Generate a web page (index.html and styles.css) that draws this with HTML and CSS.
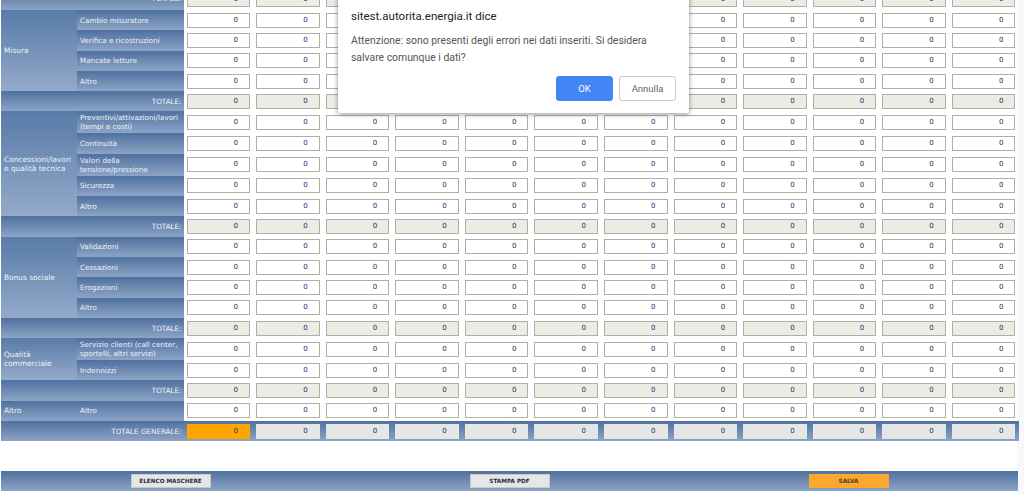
FILE: index.html
```html
<!DOCTYPE html>
<html lang="it">
<head>
  <meta charset="UTF-8" />
  <title>Maschera dati</title>
  <link rel="stylesheet" href="styles.css">
</head>
<body>

  <div class="page">
    <table class="grid" id="grid"></table>

    <div class="footer">
      <div class="footer-slot"><button class="btn">ELENCO MASCHERE</button></div>
      <div class="footer-slot"><button class="btn">STAMPA PDF</button></div>
      <div class="footer-slot"><button class="btn btn-save">SALVA</button></div>
    </div>
  </div>

  <div class="dialog">
    <div class="dialog-title">sitest.autorita.energia.it dice</div>
    <div class="dialog-text">Attenzione: sono presenti degli errori nei dati inseriti. Si desidera salvare comunque i dati?</div>
    <div class="dialog-actions">
      <button class="dialog-ok">OK</button>
      <button class="dialog-cancel">Annulla</button>
    </div>
  </div>

  <script src="script.js"></script>
</body>
</html>
```

FILE: styles.css
```css
html, body {
  margin: 0;
  height: 494px;
  overflow: hidden;
  background-color: #f8f8f8;
  font-family: "DejaVu Sans", Verdana, sans-serif;
}

.page {
  width: 1017px;
  height: 494px;
  background-color: #fff;
  padding-left: 1px;
  box-sizing: border-box;
}

.grid {
  width: 1017.5px;
  table-layout: fixed;
  border-collapse: collapse;
}

.grid td {
  padding: 0;
  vertical-align: middle;
}

.col-group { width: 76px; }
.col-label { width: 106.5px; }

.row-clip td { height: 10px; }
.row-clip .box { margin-top: -11px; }
.grid .row-clip .cell-total { background: linear-gradient(#6d89b0, #8ca4c6); }
.clip-text { margin-top: -11px; height: 9px; }

.row td { height: 20.3px; }
.row-tall td { height: 22px; }

.cell-group,
.cell-label,
.cell-total {
  color: #eef2f7;
  font-size: 7.2px;
  line-height: 9px;
}

.grid .cell-group {
  padding-left: 3px;
  font-size: 7.4px;
  background: linear-gradient(#587ba8, #94aac9);
}

.grid .cell-label {
  padding-left: 3px;
  background: linear-gradient(#4f719f, #8ca4c6);
}

.grid .cell-total {
  text-align: right;
  padding-right: 2px;
  background: linear-gradient(#4f719f, #8ca4c6);
}

.grid .cell-group.plain { background: linear-gradient(#4f719f, #8ca4c6); }

.cell-value { text-align: center; }

.bar-cell { background: linear-gradient(#4f719f, #8ca4c6); }

.box {
  width: 63.5px;
  height: 15px;
  margin: 0 auto;
  padding-right: 11px;
  box-sizing: border-box;
  background-color: #fff;
  border: 1px solid #aeaeaa;
  color: #12306a;
  font-size: 7px;
  line-height: 13px;
  text-align: right;
}

.box-total { background-color: #ecebe4; }
.box-grand { background-color: #e6e6e6; border-color: #e6e6e6; }
.box-orange { background-color: #ffa500; border-color: #ffa500; }

.footer {
  display: flex;
  width: 1017px;
  height: 20px;
  margin-top: 30px;
  background: linear-gradient(#4f719f, #8ca4c6);
}

.footer-slot {
  flex: 1;
  display: flex;
  justify-content: center;
  align-items: center;
}

.btn {
  width: 80px;
  height: 14px;
  padding: 0;
  border: 1px solid #c9c9c9;
  background-color: #e6e6e6;
  color: #1c3050;
  font-family: "DejaVu Sans", Verdana, sans-serif;
  font-size: 5.7px;
  font-weight: bold;
}

.btn-save {
  background-color: #fca72d;
  border-color: #fca72d;
  color: #4a3a1a;
}

.dialog {
  position: absolute;
  top: -10px;
  left: 338px;
  width: 351px;
  height: 123px;
  padding: 18px 13px 0;
  box-sizing: border-box;
  background-color: #fff;
  border-radius: 2px;
  box-shadow: 0 1px 5px rgba(0, 0, 0, 0.45);
  font-family: Roboto, sans-serif;
}

.dialog-title {
  color: #222;
  font-size: 11.5px;
  line-height: 16px;
}

.dialog-text {
  margin-top: 9px;
  color: #555;
  font-size: 10.4px;
  line-height: 16.5px;
}

.dialog-actions {
  display: flex;
  justify-content: flex-end;
  gap: 6px;
  margin-top: 10px;
}

.dialog-ok,
.dialog-cancel {
  width: 57px;
  height: 25px;
  padding: 0;
  border-radius: 3px;
  font-family: Roboto, sans-serif;
  font-size: 9.5px;
}

.dialog-ok {
  background-color: #4285f4;
  border: 1px solid #4285f4;
  color: #fff;
}

.dialog-cancel {
  background-color: #fff;
  border: 1px solid #c8c8c8;
  color: #666;
}
```

FILE: script.js
```js
const groups = [
  { name: 'Misura', rows: ['Cambio misuratore', 'Verifica e ricostruzioni', 'Mancate letture', 'Altro'] },
  {
    name: 'Concessioni/lavori e qualità tecnica',
    rows: ['Preventivi/attivazioni/lavori (tempi e costi)', 'Continuità', 'Valori della tensione/pressione', 'Sicurezza', 'Altro'],
    tall: [0, 2]
  },
  { name: 'Bonus sociale', rows: ['Validazioni', 'Cessazioni', 'Erogazioni', 'Altro'] },
  { name: 'Qualità commerciale', rows: ['Servizio clienti (call center, sportelli, altri servizi)', 'Indennizzi'], tall: [0] }
];

const COLS = 12;

function boxes(kind, first) {
  let html = '';
  for (let i = 0; i < COLS; i++) {
    const extra = kind && i === 0 && first ? ' ' + first : '';
    const cls = kind ? 'box ' + kind + extra : 'box';
    html += '<td class="cell-value' + (kind === 'box-grand' ? ' bar-cell' : '') + '"><div class="' + cls + '">0</div></td>';
  }
  return html;
}

function totalRow(text, kind, first) {
  return '<tr class="row"><td class="cell-total" colspan="2">' + text + '</td>' + boxes(kind, first) + '</tr>';
}

let html = '<colgroup><col class="col-group"><col class="col-label">';
for (let i = 0; i < COLS; i++) html += '<col>';
html += '</colgroup>';

html += '<tr class="row-clip"><td class="cell-total" colspan="2"><div class="clip-text">TOTALE:</div></td>' + boxes('box-total') + '</tr>';

groups.forEach(group => {
  group.rows.forEach((label, i) => {
    const tall = group.tall && group.tall.includes(i);
    html += '<tr class="' + (tall ? 'row row-tall' : 'row') + '">';
    if (i === 0) html += '<td class="cell-group" rowspan="' + group.rows.length + '">' + group.name + '</td>';
    html += '<td class="cell-label">' + label + '</td>' + boxes() + '</tr>';
  });
  html += totalRow('TOTALE:', 'box-total');
});

html += '<tr class="row"><td class="cell-group plain">Altro</td><td class="cell-label">Altro</td>' + boxes() + '</tr>';
html += totalRow('TOTALE GENERALE:', 'box-grand', 'box-orange');

document.getElementById('grid').innerHTML = html;
```
